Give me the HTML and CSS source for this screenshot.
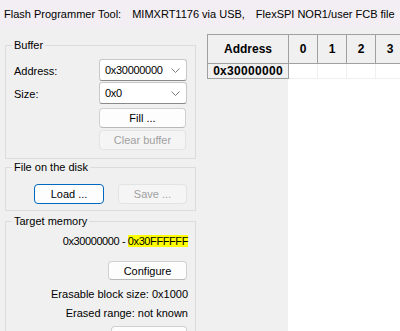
FILE: index.html
```html
<!DOCTYPE html>
<html lang="en">
<head>
    <meta charset="UTF-8">
    <meta name="viewport" content="width=device-width, initial-scale=1.0">
    <title>Flash Programmer Tool</title>
    <link rel="stylesheet" href="styles.css">
</head>
<body>

    <div class="titlebar">
        <span class="title-part">Flash Programmer Tool:</span>
        <span class="title-part">MIMXRT1176 via USB,</span>
        <span class="title-part">FlexSPI NOR1/user FCB file</span>
    </div>

    <div class="main">
        <div class="side">
            <fieldset class="group buffer">
                <legend>Buffer</legend>
                <div class="form">
                    <label>Address:</label>
                    <div class="combo">
                        <span class="combo-value">0x30000000</span>
                        <svg class="chevron" width="9" height="5" viewBox="0 0 9 5"><polyline points="0.5,0.5 4.5,4.5 8.5,0.5" fill="none" stroke="#7a7a7a" stroke-width="1"/></svg>
                    </div>
                    <label>Size:</label>
                    <div class="combo">
                        <span class="combo-value">0x0</span>
                        <svg class="chevron" width="9" height="5" viewBox="0 0 9 5"><polyline points="0.5,0.5 4.5,4.5 8.5,0.5" fill="none" stroke="#7a7a7a" stroke-width="1"/></svg>
                    </div>
                    <button class="btn fill-btn">Fill ...</button>
                    <button class="btn clear-btn" disabled>Clear buffer</button>
                </div>
            </fieldset>

            <fieldset class="group disk">
                <legend>File on the disk</legend>
                <div class="disk-buttons">
                    <button class="btn load-btn">Load ...</button>
                    <button class="btn save-btn" disabled>Save ...</button>
                </div>
            </fieldset>

            <fieldset class="group target">
                <legend>Target memory</legend>
                <div class="range">0x30000000 - <span class="mark">0x30FFFFFF</span></div>
                <button class="btn configure-btn">Configure</button>
                <div class="info first">Erasable block size: 0x1000</div>
                <div class="info">Erased range: not known</div>
                <button class="btn more-btn"></button>
            </fieldset>
        </div>

        <div class="view">
            <table class="grid">
                <tr>
                    <th class="addr-col">Address</th>
                    <th>0</th>
                    <th>1</th>
                    <th>2</th>
                    <th>3</th>
                </tr>
                <tr>
                    <th class="addr-col row-head">0x30000000</th>
                    <td></td>
                    <td></td>
                    <td></td>
                    <td></td>
                </tr>
            </table>
            <div class="filler"></div>
        </div>
    </div>

</body>
</html>
```

FILE: styles.css
```css
body {
    margin: 0;
    padding: 0;
    width: 400px;
    height: 331px;
    overflow: hidden;
    font-family: "Liberation Sans", Arial, sans-serif;
    font-size: 11px;
    color: #000;
    background-color: #f0f0f0;
}

.titlebar {
    height: 28px;
    display: flex;
    align-items: center;
    padding-left: 4px;
    background-color: #f3eef3;
    white-space: nowrap;
    overflow: hidden;
}

.title-part { margin-right: 11px; }

.main {
    display: flex;
    height: 303px;
}

.side {
    width: 191px;
    padding: 9px 4px 0 5px;
    flex-shrink: 0;
}

.group {
    margin: 0;
    border: 1px solid #dcdcdc;
    padding: 0 7px 0 6px;
    min-width: 0;
}

.group legend {
    padding: 0 2px;
    line-height: 16px;
}

/* Buffer */
.buffer { padding-top: 6px; padding-bottom: 8px; }

.form {
    display: grid;
    grid-template-columns: 85px 88px;
    align-items: center;
    padding-left: 2px;
}

.form label { line-height: 16px; }

.combo {
    height: 20px;
    margin-bottom: 1px;
    background-color: #fff;
    border: 1px solid #c8c8c8;
    border-bottom-color: #8a8a8a;
    border-radius: 3px;
    display: flex;
    align-items: center;
    justify-content: space-between;
    padding: 0 6px 0 5px;
}

.combo-value { letter-spacing: -0.3px; }

.chevron { display: block; }

.btn {
    font-family: inherit;
    font-size: 11px;
    height: 20px;
    padding: 0;
    background-color: #fdfdfd;
    border: 1px solid #d0d0d0;
    border-bottom-color: #b8b8b8;
    border-radius: 4px;
    color: #000;
}

.btn:disabled {
    background-color: #f5f5f5;
    border-color: #e3e3e3;
    color: #a0a0a0;
}

.fill-btn,
.clear-btn {
    grid-column: 2;
    width: 87px;
}

.fill-btn { margin-top: 3px; }
.clear-btn { margin-top: 2px; }

/* File on the disk */
.disk { padding-top: 9px; padding-bottom: 6px; }

.disk-buttons {
    display: flex;
    justify-content: flex-end;
    gap: 14px;
    padding-right: 1px;
}

.load-btn {
    width: 70px;
    border: 1px solid #0067c0;
}

.save-btn { width: 69px; }

/* Target memory */
.target {
    margin-top: 2px;
    padding-top: 4px;
    padding-bottom: 10px;
    display: flex;
    flex-direction: column;
    align-items: flex-end;
}

.range {
    line-height: 16px;
    letter-spacing: -0.4px;
}

.mark { background-color: #ffff00; }

.configure-btn {
    width: 79px;
    height: 19px;
    margin-top: 12px;
    margin-right: 1px;
}

.info { line-height: 16px; margin-top: 3px; }
.info.first { margin-top: 6px; }

.more-btn {
    width: 76px;
    margin-top: 5px;
    margin-right: 1px;
}

/* Memory view */
.view {
    flex: 1;
    padding: 6px 0 0 7px;
    display: flex;
    flex-direction: column;
    overflow: hidden;
}

.grid {
    border-collapse: collapse;
    table-layout: fixed;
    width: 198px;
    flex-shrink: 0;
}

.grid th {
    background-color: #f0f0f0;
    border: 1px solid #a0a0a0;
    font-weight: bold;
    font-size: 12px;
    width: 28px;
    height: 28px;
    padding: 0;
    text-align: center;
}

.grid th.addr-col { width: 80px; }

.grid th.row-head {
    height: 14px;
    line-height: 14px;
    letter-spacing: 0.3px;
}

.grid td {
    background-color: #fff;
    border: 1px solid #f0f0f0;
    border-top: none;
    padding: 0;
}

.filler {
    flex: 1;
    margin-left: 81px;
    background-color: #fff;
}
```
